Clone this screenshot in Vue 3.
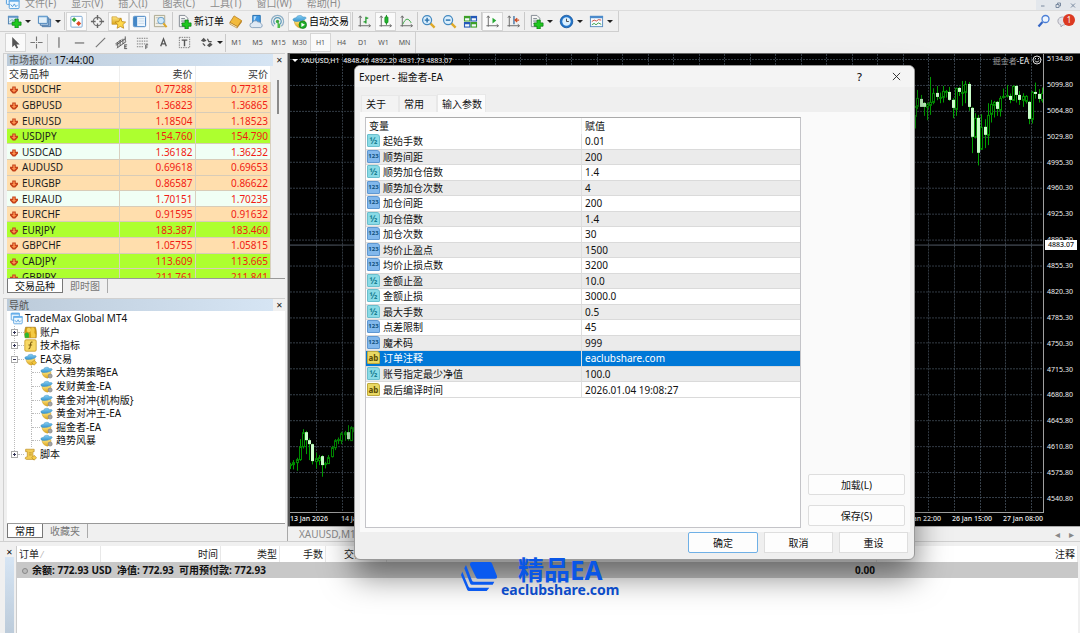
<script setup>
const menus = ['文件(F)', '显示(V)', '插入(I)', '图表(C)', '工具(T)', '窗口(W)', '帮助(H)']

const mainTools = [
  { icon: 'new-chart', label: '新图表', drop: true },
  { icon: 'profiles', label: '配置', drop: true },
  { sep: true, wide: true },
  { icon: 'market', label: '市场报价', on: true },
  { icon: 'crosshair-win', label: '数据窗口' },
  { icon: 'favorite', label: '导航', on: true },
  { icon: 'terminal', label: '终端', on: true },
  { icon: 'tester', label: '策略测试' },
  { sep: true, wide: true },
  { icon: 'order', label: '新订单', text: true },
  { icon: 'book', label: '编辑器' },
  { icon: 'hosting', label: '主机' },
  { icon: 'signal', label: '信号' },
  { icon: 'auto', label: '自动交易', text: true, on: true },
  { sep: true, wide: true },
  { icon: 'bars', label: '柱状图' },
  { icon: 'candles', label: '蜡烛图', on: true },
  { icon: 'line', label: '折线图' },
  { sep: true },
  { icon: 'zoom-in', label: '放大' },
  { icon: 'zoom-out', label: '缩小' },
  { icon: 'tile', label: '平铺' },
  { sep: true },
  { icon: 'scroll', label: '自动滚动', on: true },
  { icon: 'shift', label: '图表平移' },
  { sep: true },
  { icon: 'indicator', label: '指标', drop: true },
  { icon: 'clock', label: '周期', drop: true },
  { icon: 'template', label: '模板', drop: true },
]

const drawTools = [
  { icon: 'cursor', label: '光标', on: true },
  { icon: 'cross', label: '十字线' },
  { sep: true },
  { icon: 'vline', label: '垂直线' },
  { icon: 'hline', label: '水平线' },
  { icon: 'trend', label: '趋势线' },
  { icon: 'channel', label: '通道' },
  { icon: 'fibo', label: '斐波那契' },
  { icon: 'letter', label: '文字' },
  { icon: 'label', label: '标签' },
  { icon: 'arrows', label: '箭头', drop: true },
]
const periods = ['M1', 'M5', 'M15', 'M30', 'H1', 'H4', 'D1', 'W1', 'MN']

const quotes = [
  ['USDCHF', '0.77288', '0.77318', 'peach'],
  ['GBPUSD', '1.36823', '1.36865', 'peach'],
  ['EURUSD', '1.18504', '1.18523', 'peach'],
  ['USDJPY', '154.760', '154.790', 'lime'],
  ['USDCAD', '1.36182', '1.36232', 'mint'],
  ['AUDUSD', '0.69618', '0.69653', 'peach'],
  ['EURGBP', '0.86587', '0.86622', 'peach'],
  ['EURAUD', '1.70151', '1.70235', 'mint'],
  ['EURCHF', '0.91595', '0.91632', 'peach'],
  ['EURJPY', '183.387', '183.460', 'lime'],
  ['GBPCHF', '1.05755', '1.05815', 'peach'],
  ['CADJPY', '113.609', '113.665', 'lime'],
  ['GBPJPY', '211.761', '211.841', 'lime'],
]

const tree = [
  { level: 0, icon: 'broker', text: 'TradeMax Global MT4' },
  { level: 1, icon: 'accounts', text: '账户', box: '+' },
  { level: 1, icon: 'func', text: '技术指标', box: '+' },
  { level: 1, icon: 'expert', text: 'EA交易', box: '-' },
  { level: 2, icon: 'expert-off', text: '大趋势策略EA' },
  { level: 2, icon: 'expert-off', text: '发财黄金-EA' },
  { level: 2, icon: 'expert-off', text: '黄金对冲{机构版}' },
  { level: 2, icon: 'expert-off', text: '黄金对冲王-EA' },
  { level: 2, icon: 'expert-off', text: '掘金者-EA' },
  { level: 2, icon: 'expert-off', text: '趋势风暴' },
  { level: 1, icon: 'script', text: '脚本', box: '+' },
]

const prices = [
  '5134.80', '5099.80', '5064.80', '5029.80', '4995.30', '4960.30', '4925.30', '4890.30', '4855.30',
  '4820.30', '4785.30', '4750.30', '4715.30', '4680.80', '4645.80', '4610.80', '4575.80', '4540.80',
]
const gridX = Array.from({ length: 29 }, (_, i) => Math.round(26 + i * 25.52) + 0.5)
const gridY = prices.map((_, i) => Math.round(5 + i * 25.85) + 0.5)

// [x, high, low, body top, body bottom, falling] in thirds of a pixel
const early = [
  [15, 188, 207, 191, 194, 0], [25, 180, 208, 185, 192, 0], [35, 173, 212, 178, 188, 0], [44, 117, 182, 138, 178, 0],
  [54, 87, 145, 97, 140, 0], [64, 92, 162, 97, 120, 1], [73, 115, 180, 120, 132, 1], [82, 130, 193, 133, 185, 1],
  [92, 158, 205, 175, 185, 0], [101, 165, 195, 170, 178, 0], [111, 165, 230, 168, 194, 1], [121, 185, 205, 188, 192, 0],
  [130, 165, 190, 170, 187, 0], [140, 137, 172, 142, 170, 0], [150, 117, 150, 120, 142, 0], [159, 112, 132, 117, 120, 0],
  [169, 95, 132, 98, 118, 0], [179, 92, 122, 97, 102, 0], [188, 75, 122, 97, 118, 1], [197, 78, 122, 80, 120, 0],
  [206, 78, 100, 80, 92, 0],
]
const late = [
  [104, 315, 383, 318, 345, 0], [112, 267, 325, 292, 315, 0], [122, 282, 318, 294, 318, 1], [132, 303, 345, 307, 319, 1],
  [142, 305, 358, 310, 320, 0], [151, 228, 342, 302, 312, 0], [160, 262, 310, 275, 302, 0], [170, 255, 298, 277, 290, 1],
  [180, 275, 307, 287, 290, 0], [190, 255, 305, 270, 289, 0], [199, 267, 290, 270, 273, 0], [208, 258, 300, 272, 297, 1],
  [218, 292, 352, 297, 321, 1], [227, 260, 345, 260, 322, 0], [237, 258, 285, 260, 272, 1], [247, 240, 315, 272, 275, 0],
  [256, 240, 307, 250, 274, 0], [266, 243, 330, 250, 320, 1], [275, 318, 457, 321, 409, 1], [286, 337, 413, 352, 410, 0],
  [295, 342, 494, 352, 457, 1], [304, 340, 447, 378, 443, 0], [314, 355, 442, 378, 402, 1], [323, 307, 433, 342, 402, 0],
  [333, 297, 365, 310, 340, 0], [342, 300, 350, 303, 313, 0], [351, 300, 345, 303, 325, 1], [361, 285, 347, 290, 325, 0],
  [370, 263, 293, 285, 288, 0], [380, 252, 290, 283, 287, 0], [390, 278, 307, 285, 298, 1], [400, 253, 300, 255, 298, 0],
  [409, 253, 305, 256, 283, 1], [418, 270, 312, 282, 298, 1], [428, 277, 318, 286, 298, 0], [438, 283, 308, 286, 302, 0],
  [448, 300, 370, 303, 354, 1], [457, 270, 368, 272, 352, 0], [466, 245, 293, 273, 280, 1], [476, 265, 305, 280, 295, 1],
  [486, 260, 305, 275, 297, 0],
]
function place(list, ox, oy) {
  return list.map(([x, h, l, t, b, down]) => ({
    x: Math.round(x / 3 + ox),
    high: h / 3 + oy,
    low: l / 3 + oy,
    top: Math.round(t / 3 + oy),
    size: Math.max(1, Math.round((b - t) / 3)),
    down,
  }))
}
const candles = [...place(early, -5, 347), ...place(late, 590, -53)]

const params = [
  ['起始手数', '0.01', 'real'],
  ['顺势间距', '200', 'int'],
  ['顺势加仓倍数', '1.4', 'real'],
  ['顺势加仓次数', '4', 'int'],
  ['加仓间距', '200', 'int'],
  ['加仓倍数', '1.4', 'real'],
  ['加仓次数', '30', 'int'],
  ['均价止盈点', '1500', 'int'],
  ['均价止损点数', '3200', 'int'],
  ['金额止盈', '10.0', 'real'],
  ['金额止损', '3000.0', 'real'],
  ['最大手数', '0.5', 'real'],
  ['点差限制', '45', 'int'],
  ['魔术码', '999', 'int'],
  ['订单注释', 'eaclubshare.com', 'text'],
  ['账号指定最少净值', '100.0', 'real'],
  ['最后编译时间', '2026.01.04 19:08:27', 'text'],
]
const badge = { real: '½', int: '123', text: 'ab' }
</script>

<template>
  <div class="app">
    <svg class="defs" aria-hidden="true">
      <defs>
        <linearGradient id="gold" x1="0" y1="0" x2="0" y2="1"><stop offset="0" stop-color="#ffe680" /><stop offset="1" stop-color="#dba41a" /></linearGradient>
        <linearGradient id="blue" x1="0" y1="0" x2="0" y2="1"><stop offset="0" stop-color="#86cdf2" /><stop offset="1" stop-color="#3796d0" /></linearGradient>
        <symbol id="plus" viewBox="0 0 16 16"><path d="M8.500 6.500h3.500v3h3v3.500h-3v3H8.500v-3h-3V9.500h3z" fill="#1fc81f" stroke="#0a7d12" stroke-width=".8" /></symbol>
        <symbol id="new-chart" viewBox="0 0 16 16"><rect x="1.500" y="2.500" width="10" height="8" fill="#dcecf8" stroke="#4d7fae" /><path d="M1 2h11v2H1z" fill="#5f94c6" /><path d="M3 8l2-2 2 1 3-2" stroke="#7aa" fill="none" /><use href="#plus" y="-1" width="16" height="16" /></symbol>
        <symbol id="profiles" viewBox="0 0 16 16"><path d="M5.500 5.500h9v8h-9z" fill="#8fb4d8" stroke="#4a76a6" /><path d="M3.500 4h9v8h-9z" fill="#b8d3ea" stroke="#4a76a6" /><path d="M1.500 2.500h9.500v7.500H1.500z" fill="#e2f0fa" stroke="#4a84bb" /><path d="M1 2h10.500v1.500H1z" fill="#6aa0d0" /></symbol>
        <symbol id="market" viewBox="0 0 16 16"><rect x="2" y="2.500" width="12" height="11.500" rx="1" fill="#fff" stroke="#76a5d2" /><path d="M5.500 3.500l2.700 2.700-2.700 2.700-2.700-2.700z" fill="#36a83a" /><path d="M10.300 7.500l2.700 2.700-2.700 2.700-2.700-2.700z" fill="#e14a26" /></symbol>
        <symbol id="crosshair-win" viewBox="0 0 16 16"><circle cx="8" cy="8" r="4.500" fill="#f4f4f4" stroke="#777" stroke-width="1.300" /><path d="M8 1v5M8 10v5M1 8h5M10 8h5" stroke="#666" stroke-width="1.500" /></symbol>
        <symbol id="favorite" viewBox="0 0 16 16"><path d="M1 3h5l1 1.500h4V11H1z" fill="url(#gold)" stroke="#c3942c" stroke-width=".7" /><path d="M10 4.500l1.700 3.600 3.900.5-2.900 2.700.8 3.900L10 13.300l-3.500 1.900.8-3.900-2.900-2.700 3.900-.5z" fill="#ffd84a" stroke="#bb8514" stroke-width=".8" /></symbol>
        <symbol id="terminal" viewBox="0 0 16 16"><rect x="1.500" y="2.500" width="13" height="11" rx="1" fill="#eef6fd" stroke="#3e7fbf" /><path d="M2 3h3.500v10H2z" fill="#4387c7" /><path d="M7 5h6M7 7.500h6M7 10h6" stroke="#b7cfe3" stroke-width=".7" /></symbol>
        <symbol id="tester" viewBox="0 0 16 16"><path d="M1.500 1.500h11v12h-11z" fill="#f2f0e4" stroke="#aaa58c" /><path d="M3 4h8M3 10h5" stroke="#bbb" /><circle cx="8.500" cy="7" r="3.500" fill="#cde8fb" stroke="#6ba0ca" /><path d="M11 10l3.500 4" stroke="#dda728" stroke-width="2.200" /></symbol>
        <symbol id="sheet" viewBox="0 0 16 16"><path d="M2.500 1.500h6l3 3v9h-9z" fill="#f6f6f6" stroke="#808890" /><path d="M4.500 5h4M4.500 7.500h4M4.500 10h3" stroke="#68747e" /></symbol>
        <symbol id="order" viewBox="0 0 16 16"><use href="#sheet" width="16" height="16" /><use href="#plus" width="16" height="16" /></symbol>
        <symbol id="book" viewBox="0 0 16 16"><path d="M6.500 2l8 5-4.500 6.500L2 9z" fill="#f2ba3c" stroke="#b57a13" stroke-width=".8" /><path d="M2 9l8 4.500-.3 1.500L2 10.800z" fill="#fff2c4" stroke="#a56f17" stroke-width=".6" /><path d="M14.500 7l-4.500 6.500v1.500l4.800-6.500z" fill="#b87d18" /></symbol>
        <symbol id="hosting" viewBox="0 0 16 16"><path d="M4 1.500h8V10H4z" fill="#3f97e2" stroke="#246faf" /><path d="M5 2.500h3L6 7H5z" fill="#b7defb" /><path d="M3.500 14.500a2.500 2.500 0 010-5 3.500 3.500 0 016-1 3 3 0 013.500 2 2.200 2.200 0 01-.5 4z" fill="#dfe9f4" stroke="#6e8eae" stroke-width=".8" /></symbol>
        <symbol id="signal" viewBox="0 0 16 16"><g fill="none" stroke-width="1.300"><path d="M4 13a6.500 6.500 0 118 0" stroke="#8eafc6" /><path d="M5.500 11a4 4 0 115 0" stroke="#5b9bb9" /></g><circle cx="8" cy="8" r="1.800" fill="#39a83f" /><path d="M8 9c3 1 3.500 3.500 2.500 6H8z" fill="#4cbb4a" /></symbol>
        <symbol id="expert-base" viewBox="0 0 16 16"><path d="M2.500 7c0 4 2 7 6.500 8 3.500-1 4.500-4.500 4.500-8z" fill="url(#gold)" stroke="#c79a25" stroke-width=".6" /><path d="M1 6C1 4.800 3 4.300 4.500 4 5 1.300 10.500.5 11.500 3.300c1.500-.2 3.500-.2 3.500.8 0 2-5.500 4-9.500 3.900C3 8 1 7.200 1 6z" fill="url(#blue)" stroke="#3b8cc0" stroke-width=".6" /></symbol>
        <symbol id="auto" viewBox="0 0 16 16"><use href="#expert-base" width="16" height="16" /><circle cx="11.500" cy="11.500" r="4" fill="#20ad29" stroke="#0b7814" stroke-width=".7" /><path d="M10 9.200v4.600l3.800-2.300z" fill="#fff" /></symbol>
        <symbol id="expert" viewBox="0 0 16 16"><use href="#expert-base" width="16" height="16" /><path d="M12.500 9l3 3-3 3-3-3z" fill="#f3c63c" stroke="#a87c16" stroke-width=".7" /></symbol>
        <symbol id="expert-off" viewBox="0 0 16 16"><use href="#expert-base" width="16" height="16" /><circle cx="12.500" cy="12.300" r="2.500" fill="#a5a5a5" stroke="#808080" stroke-width=".8" /></symbol>
        <symbol id="axes" viewBox="0 0 16 16"><path d="M3.500 2v11.500M1.500 12.500H14M2 4l1.500-2L5 4M12.500 11l2 1.500-2 1.500" stroke="#666" fill="none" /></symbol>
        <symbol id="bars" viewBox="0 0 16 16"><use href="#axes" width="16" height="16" /><path d="M9.500 3v7M9.500 4.500H12M7 8.500h2.500" stroke="#179521" stroke-width="1.300" /></symbol>
        <symbol id="candles" viewBox="0 0 16 16"><use href="#axes" width="16" height="16" /><path d="M9 1v10.500" stroke="#13851c" /><rect x="7.300" y="3" width="3.400" height="6.500" rx="1" fill="#22b52d" stroke="#13851c" stroke-width=".7" /></symbol>
        <symbol id="line" viewBox="0 0 16 16"><use href="#axes" width="16" height="16" /><path d="M4 11c3-7 6-7 9-1.500" stroke="#38a541" fill="none" /></symbol>
        <symbol id="lens" viewBox="0 0 16 16"><path d="M9.500 9.500l5 5" stroke="#dfa928" stroke-width="2.500" /><circle cx="6.500" cy="6.500" r="4.800" fill="#dbeffd" stroke="#4388bf" stroke-width="1.300" /></symbol>
        <symbol id="zoom-in" viewBox="0 0 16 16"><use href="#lens" width="16" height="16" /><path d="M4 6.500h5M6.500 4v5" stroke="#276fab" stroke-width="1.500" /></symbol>
        <symbol id="zoom-out" viewBox="0 0 16 16"><use href="#lens" width="16" height="16" /><path d="M4 6.500h5" stroke="#276fab" stroke-width="1.500" /></symbol>
        <symbol id="tile" viewBox="0 0 16 16"><path d="M1 2h7v6H1z" fill="#3da029" /><path d="M8 2h7v6H8z" fill="#2358b8" /><path d="M1 8.500h7v6H1z" fill="#2358b8" /><path d="M8 8.500h7v6H8z" fill="#3da029" /><path d="M2.200 4.500h4.500v2.300H2.200zM9.300 4.500h4.500v2.300H9.300zM2.200 11h4.500v2.300H2.200zM9.300 11h4.500v2.300H9.300z" fill="#f1f8fb" /></symbol>
        <symbol id="scroll" viewBox="0 0 16 16"><use href="#axes" width="16" height="16" /><path d="M8 4v6l4-3z" fill="#26a832" /></symbol>
        <symbol id="shift" viewBox="0 0 16 16"><use href="#axes" width="16" height="16" /><path d="M8.500 2v9" stroke="#29639b" stroke-width="1.300" /><path d="M14 6.500H9.500M12 4.500l-2.500 2 2.500 2" stroke="#cf4a20" fill="none" stroke-width="1.200" /></symbol>
        <symbol id="indicator" viewBox="0 0 16 16"><use href="#sheet" width="16" height="16" /><use href="#plus" width="16" height="16" /></symbol>
        <symbol id="clock" viewBox="0 0 16 16"><circle cx="8" cy="8" r="6.700" fill="#2376cb" stroke="#0e4e95" stroke-width=".8" /><circle cx="8" cy="8" r="4.500" fill="#d9efff" /><path d="M8 5v3h2.500" stroke="#444" fill="none" /></symbol>
        <symbol id="template" viewBox="0 0 16 16"><rect x="1.500" y="2.500" width="13" height="11" fill="#f7fbff" stroke="#588cbe" /><path d="M1 2h14v2.500H1z" fill="#4b8acb" /><path d="M3 8l2.500-1.500L8 7.500 10 6l3 .5" stroke="#cb4835" fill="none" /><path d="M3 11.500L5.500 10l2 1.500L10 9.500l3 1.500" stroke="#369c43" fill="none" /></symbol>
        <symbol id="cursor" viewBox="0 0 16 16"><path d="M4.500 2v11l2.600-2.400L9 14.500l1.800-.9L9 10h3.500z" fill="#555" /></symbol>
        <symbol id="cross" viewBox="0 0 16 16"><path d="M8 1.500v5M8 9.500v5M1.500 8h5M9.500 8h5M7.500 8h1" stroke="#777" stroke-width="1.200" /></symbol>
        <symbol id="vline" viewBox="0 0 16 16"><path d="M8.500 2.500v11" stroke="#666" stroke-width="1.200" /></symbol>
        <symbol id="hline" viewBox="0 0 16 16"><path d="M3 8.500h10" stroke="#666" stroke-width="1.200" /></symbol>
        <symbol id="trend" viewBox="0 0 16 16"><path d="M3 13L13 3" stroke="#777" stroke-width="1.200" /></symbol>
        <symbol id="channel" viewBox="0 0 16 16"><path d="M2 11L12 4M3 14L13 7M4 8v5M6.500 5.500v6M9.500 4v5.500M12 1.500V7M1.500 9.500L8 5" stroke="#555" /><path d="M11 10.500h3M11 12.500h2.500M11 14.500h3M11.500 10.500v4" stroke="#555" /></symbol>
        <symbol id="fibo" viewBox="0 0 16 16"><path d="M2 3.500h12M2 6.500h12M2 9.500h12M2 12.500h7" stroke="#777" stroke-dasharray="1.500 1" /><path d="M11.500 15v-4.500H14M11.500 12.800h2" stroke="#555" fill="none" /></symbol>
        <symbol id="letter" viewBox="0 0 16 16"><path d="M5 12L8 4l3 8M6 9.500h4" stroke="#555" stroke-width="1.400" fill="none" /></symbol>
        <symbol id="label" viewBox="0 0 16 16"><rect x="2.500" y="2.500" width="11" height="11" fill="none" stroke="#777" stroke-dasharray="1.500 1" /><path d="M5 5.500h6M8 5.500V12" stroke="#555" stroke-width="1.500" /></symbol>
        <symbol id="arrows" viewBox="0 0 16 16"><path d="M5 3l3 3-3 1.500L2 6zM12 8l2.500 2.500L11 13 8.500 11z" fill="#555" /><path d="M4 9l2.500 2.500M9 4l1.500 3h3" stroke="#555" stroke-width="1.300" fill="none" /></symbol>
        <symbol id="broker" viewBox="0 0 16 16"><rect x="1.500" y="1.500" width="10" height="8.500" rx="1" fill="#e7f4ff" stroke="#4d9bdc" /><path d="M1 1h11v2.200H1z" fill="#66aeea" /><rect x="4.500" y="5.500" width="10.500" height="9" rx="1" fill="#eef8ff" stroke="#4d9bdc" /><path d="M4 5h11.500v2.200H4z" fill="#66aeea" /><path d="M6 10l2 2.500 2-3 1.500 3 2-2" stroke="#4d9bdc" fill="none" /></symbol>
        <symbol id="accounts" viewBox="0 0 16 16"><path d="M2 1.500h12c1.500 4 1.500 9 1 13H1.500C.500 10 .500 6 2 1.500z" fill="#d39d16" stroke="#9a6e08" stroke-width=".7" /><circle cx="6" cy="5" r="2.700" fill="#f6d257" /><path d="M9 2c3-1 4.500 1 4 4-.5 1.500-.5 2.500 1 4v4H8.500c1-4-1-5 0-7z" fill="#f4ca45" /><path d="M1 14.500V10c1-2.500 4-2.500 5 0v4.500z" fill="#2fb72f" /></symbol>
        <symbol id="func" viewBox="0 0 16 16"><rect x="1" y="1" width="14" height="14" rx="1.500" fill="#f7d864" stroke="#c89b25" /><path d="M10.500 4c-2-1-2.300.5-2.700 3.500S7.300 12.500 5.500 12M5.500 7.500h4.500" stroke="#7b5b0c" stroke-width="1.300" fill="none" /></symbol>
        <symbol id="script" viewBox="0 0 16 16"><path d="M2 1.500h10.500v3H11V11h1.500v3H3c-2 0-2-3 0-3h1V4.500H2z" fill="#f3cd54" stroke="#b98a20" stroke-width=".8" /><path d="M6 6h3.500M6 8.500h3.500" stroke="#b88d28" /><path d="M12.500 9l3 3-3 3-3-3z" fill="#f7cc47" stroke="#a87c16" stroke-width=".7" /></symbol>
        <symbol id="down" viewBox="0 0 16 16"><path d="M4.500 1h7v4.500H16V9l-5.500 6h-5L0 9V5.500h4.500z" fill="#c4421a" /><path d="M6.500 3h3v5h3L8 12.500 3.500 8h3z" fill="#ff9350" /></symbol>
      </defs>
    </svg>

    <header class="top">
      <nav class="menu">
        <svg class="i16"><use href="#broker" /></svg>
        <a v-for="m in menus" :key="m" href="#">{{ m }}</a>
        <div class="winbtns">
          <button aria-label="最小化"><svg viewBox="0 0 6 6"><path d="M1 4h3.500" /></svg></button>
          <button aria-label="还原"><svg viewBox="0 0 6 6"><path d="M1 2.500h3v3H1zM2.500 2.500V1H5.500v3H4" /></svg></button>
          <button aria-label="关闭"><svg viewBox="0 0 6 6"><path d="M1 1.500l4 4M5 1.500l-4 4" /></svg></button>
        </div>
      </nav>
      <div class="bars">
        <div>
          <div class="toolbar first">
            <template v-for="(t, i) in mainTools" :key="i">
              <i v-if="t.sep" class="sep" :class="{ wide: t.wide }"></i>
              <button v-else class="tool" :class="{ on: t.on, drop: t.drop, text: t.text }" :aria-label="t.label">
                <svg class="i16"><use :href="'#' + t.icon" /></svg>
                <span v-if="t.text">{{ t.label }}</span>
                <i v-if="t.drop" class="caret"></i>
              </button>
            </template>
          </div>
          <div class="toolbar second">
            <template v-for="(t, i) in drawTools" :key="i">
              <i v-if="t.sep" class="sep"></i>
              <button v-else class="tool" :class="{ on: t.on, drop: t.drop }" :aria-label="t.label">
                <svg class="i16"><use :href="'#' + t.icon" /></svg>
                <i v-if="t.drop" class="caret"></i>
              </button>
            </template>
            <i class="sep"></i>
            <button v-for="p in periods" :key="p" class="tool period" :class="{ on: p === 'H1' }">{{ p }}</button>
          </div>
        </div>
        <div class="right-tools">
          <button aria-label="搜索"><svg viewBox="0 0 14 14"><path d="M5.500 8L1.500 12.500" stroke="#3465c4" stroke-width="2.200" /><circle cx="8.500" cy="5" r="3.500" fill="#eef6ff" stroke="#4b7fd6" stroke-width="1.300" /></svg></button>
          <button class="bell" aria-label="通知"><svg viewBox="0 0 14 14"><path d="M1 6c1-4 8-4 9 0s-2 5-4 5l-2 2v-2C2 10.500.500 8.500 1 6z" fill="#e3e3ea" stroke="#a9a9b4" /></svg><span class="count">1</span></button>
        </div>
      </div>
    </header>

    <main class="work">
      <aside class="dock">
        <section class="panel quotes">
          <div class="cap"><h2>市场报价: <b>17:44:00</b></h2><button aria-label="关闭市场报价">✕</button></div>
          <div class="quote-body">
            <table>
              <thead><tr><th>交易品种</th><th>卖价</th><th>买价</th></tr></thead>
              <tbody>
                <tr v-for="q in quotes" :key="q[0]" :class="q[3]">
                  <td><svg class="arrow"><use href="#down" /></svg>{{ q[0] }}</td><td>{{ q[1] }}</td><td>{{ q[2] }}</td>
                </tr>
              </tbody>
            </table>
            <div class="track"><i></i></div>
          </div>
          <div class="tabs"><button class="active">交易品种</button><button>即时图</button></div>
        </section>
        <section class="panel navigator">
          <div class="cap"><h2>导航</h2><button aria-label="关闭导航">✕</button></div>
          <div class="tree-body">
            <ul class="tree">
              <li v-for="n in tree" :key="n.text" :class="'l' + n.level">
                <i v-if="n.level === 2" class="stem"></i>
                <i v-if="n.box" class="box" :class="{ plus: n.box === '+' }"></i>
                <i v-if="n.level" class="dots"></i>
                <svg class="node"><use :href="'#' + n.icon" /></svg><span>{{ n.text }}</span>
              </li>
            </ul>
          </div>
          <div class="tabs"><button class="active">常用</button><button>收藏夹</button></div>
        </section>
      </aside>

      <section class="chart-area">
        <div class="chart">
          <div class="plot">
            <svg viewBox="0 0 753 459" preserveAspectRatio="none">
              <g class="grid">
                <line v-for="x in gridX" :key="'x' + x" :x1="x" :x2="x" y1="0" y2="459" />
                <line v-for="y in gridY" :key="'y' + y" x1="0" x2="753" :y1="y" :y2="y" />
              </g>
              <line class="now" x1="0" x2="753" y1="191.5" y2="191.5" />
              <g v-for="c in candles" :key="c.x" :class="c.down ? 'fall' : 'rise'">
                <line :x1="c.x + 0.5" :x2="c.x + 0.5" :y1="c.high" :y2="c.low" />
                <rect v-if="c.down" :x="c.x - 1" :y="c.top" width="3" :height="c.size" />
                <rect v-else :x="c.x - 0.5" :y="c.top + 0.5" width="2" :height="c.size" />
              </g>
            </svg>
            <p class="ohlc"><i></i>XAUUSD,H1&nbsp; 4848.46 4892.20 4831.73 4883.07</p>
            <p class="ea-name"><span>掘金者</span>-EA <svg viewBox="0 0 10 10"><circle cx="5" cy="5" r="4" /><path d="M3 5.500c.500 2 3.500 2 4 0M3.500 3v1M6.500 3v1" /></svg></p>
          </div>
          <ol class="price-axis"><li v-for="p in prices" :key="p">{{ p }}</li></ol>
          <div class="time-axis">
            <span>13 Jan 2026</span><span>14 Jan 07:00</span>
            <span class="push">23 Jan 22:00</span><span>26 Jan 15:00</span><span>27 Jan 08:00</span>
          </div>
          <span class="price-tag">4883.07</span>
        </div>
        <div class="chart-tabs"><button>XAUUSD,M1</button><span>◂</span><span>▸</span></div>
      </section>
    </main>

    <section class="terminal">
      <div class="strip"><button aria-label="关闭终端">✕</button><i></i></div>
      <div class="orders">
        <table>
          <colgroup><col class="c1"><col class="c2"><col class="c3"><col class="c4"><col class="c5"><col><col class="c7"></colgroup>
          <thead><tr><th>订单 <small>⁄</small></th><th>时间</th><th>类型</th><th>手数</th><th>交易品种</th><th></th><th>注释</th></tr></thead>
          <tbody><tr><td colspan="5"><i class="dot"></i>余额: 772.93 USD&nbsp; 净值: 772.93&nbsp; 可用预付款: 772.93</td><td>0.00</td><td></td></tr></tbody>
        </table>
      </div>
    </section>

    <div class="dialog" role="dialog" aria-label="Expert - 掘金者-EA">
      <div class="title"><h1>Expert - 掘金者-EA</h1><button class="help" aria-label="帮助">?</button><button aria-label="关闭"><svg viewBox="0 0 10 10"><path d="M1 1l8 8M9 1L1 9" /></svg></button></div>
      <div class="dlg-tabs"><button>关于</button><button>常用</button><button class="active">输入参数</button></div>
      <div class="page">
        <div class="list">
          <table>
            <thead><tr><th>变量</th><th>赋值</th></tr></thead>
            <tbody>
              <tr v-for="p in params" :key="p[0]" :class="{ picked: p[0] === '订单注释' }">
                <td><i class="kind" :class="p[2]">{{ badge[p[2]] }}</i>{{ p[0] }}</td><td>{{ p[1] }}</td>
              </tr>
            </tbody>
          </table>
        </div>
        <div class="side"><button>加载(L)</button><button>保存(S)</button></div>
      </div>
      <div class="actions"><button class="primary">确定</button><button>取消</button><button>重设</button></div>
    </div>

    <div class="mark">
      <svg viewBox="0 0 36 30"><path d="M11 0h18q1.500 0 2 1.500L36 14q.500 2.700-2 2.700H17q-1.500 0-2-1.500L9 3Q8.700 0 11 0z" /><path d="M5 3l6 15.500q.500 1.200 2 1.200h20.300l-1.600 3H11q-1.300 0-1.800-1.200L3.300 6.300z" /><path d="M1.300 9.700L7.500 24.500q.500 1.200 2 1.200h18.800L25.700 29H8q-1.300 0-1.800-1.200L0 13z" /></svg>
      <div><strong>精品EA</strong><span>eaclubshare.com</span></div>
    </div>
  </div>
</template>

<style>
html, body { margin: 0; background: #f0f0f0; }
</style>

<style scoped>
* { box-sizing: border-box; }
.app {
  position: relative; display: flex; flex-direction: column; height: 100vh; overflow: hidden;
  background: #f0f0f0; color: #111; font: 10px/14px "Noto Sans", "Noto Sans CJK SC", sans-serif;
}
button { font: inherit; color: inherit; border: 0; background: none; padding: 0; margin: 0; white-space: nowrap; }
h1, h2, p, ul, ol { margin: 0; padding: 0; font-size: inherit; font-weight: 400; list-style: none; }
table { border-collapse: separate; border-spacing: 0; table-layout: fixed; width: 100%; }
th, td { padding: 0; font-weight: 400; line-height: 14px; white-space: nowrap; }
svg { display: block; flex: none; }
.defs { position: absolute; width: 0; height: 0; }
.i16 { width: 15px; height: 15px; }

.menu { display: flex; align-items: flex-end; gap: 15px; height: 11px; padding-left: 5px; overflow: hidden; border-bottom: 1px solid #dcdcdc; color: #8c8c8c; }
.menu > svg { margin-right: -10px; }
.menu a { color: inherit; text-decoration: none; }
.winbtns { margin-left: auto; display: flex; width: 44px; height: 10px; background: #e3e7ec; justify-content: space-around; align-items: center; }
.winbtns svg { width: 6px; height: 6px; fill: none; stroke: #7a8aa0; stroke-width: 1; }
.bars { display: flex; justify-content: space-between; align-items: flex-start; height: 42px; }
.toolbar { display: flex; align-items: center; height: 21px; width: max-content; border: 0 solid #cfcfcf; border-right-width: 1px; }
.toolbar.first { padding-left: 3px; padding-right: 3px; border-bottom-width: 1px; }
.toolbar.second { padding-left: 5px; }
.tool { display: flex; align-items: center; justify-content: center; width: 21px; height: 19px; }
.tool.on { background: #fafafa; border: 1px solid #d6d6d6; }
.tool.drop { width: 30px; padding-left: 4px; justify-content: flex-start; gap: 3px; }
.tool.text { width: auto; padding: 0 1px 0 3px; gap: 2px; color: #000; }
.tool.period { color: #555; font-size: 7px; }
.caret { border: 3px solid transparent; border-top-color: #222; border-bottom: 0; }
.sep { width: 1px; height: 18px; background: #c9c9c9; }
.sep.wide { margin: 0 1px; }
.right-tools { display: flex; align-items: center; gap: 6px; padding: 3px 5px 0 0; }
.right-tools svg { width: 14px; height: 14px; }
.bell { position: relative; width: 18px; }
.count { position: absolute; right: 0; top: 0; width: 12px; height: 12px; border-radius: 50%; background: #dc3a22; color: #fff; font-size: 8px; line-height: 12px; }

.work { display: flex; flex: 1; min-height: 0; }
.dock { display: flex; flex-direction: column; gap: 4px; width: 288px; padding: 0 2px 0 3px; border-right: 1px solid #a8a8a8; }
.panel { display: flex; flex-direction: column; padding-left: 3px; border: 1px solid #d0d0d0; border-width: 1px 0 0 1px; }
.quotes { flex: 0 0 240px; }
.navigator { flex: 1; min-height: 0; }
.cap { display: flex; flex: none; height: 12px; line-height: 12px; }
.cap h2 { flex: 1; padding-left: 2px; background: linear-gradient(90deg, #bccbda, #d6e5f4); color: #555; }
.cap b { color: #111; font-weight: 400; }
.cap button { width: 12px; font-size: 8px; color: #222; }
.quote-body { display: flex; flex: none; height: 213px; overflow: hidden; background: #fff; border-bottom: 1px solid #999; }
.quote-body table { flex: 1; height: 219px; }
.quote-body th:first-child { width: 113px; text-align: left; padding-left: 2px; }
.quote-body th { height: 16px; text-align: right; padding-right: 2px; border-right: 1px solid #eee; color: #333; }
.quote-body td { text-align: right; padding-right: 2px; color: #f11c14; border-bottom: 1px solid #d8ccb8; border-right: 1px solid #d8d0c0; }
.quote-body td:first-child { text-align: left; color: #1c1c1c; }
.peach { background: #ffdead; }
.lime { background: #adff2f; }
.mint { background: #f0fff5; }
.arrow { display: inline-block; width: 8px; height: 8px; margin: 0 4px 0 3px; vertical-align: -1px; }
.track { width: 14px; background: #f0f0f0; padding: 14px 6px 0; }
.track i { display: block; width: 2px; height: 34px; background: #8a8a8a; }
.tabs { display: flex; flex: none; height: 15px; }
.tabs button { padding: 0 7px; color: #777; border-right: 1px solid #aaa; height: 14px; line-height: 14px; }
.tabs .active { background: #fff; color: #111; border: 1px solid #777; border-top: 0; }
.navigator .tabs { height: 17px; }
.tree-body { flex: 1; min-height: 0; padding-top: 1px; background: #fff; border-bottom: 1px solid #999; }
.tree { position: relative; height: 149px; display: grid; grid-auto-rows: 1fr; }
.tree::before { content: ""; position: absolute; left: 7px; top: 14px; bottom: 8px; border-left: 1px dotted #bbb; }
.tree li { display: flex; align-items: center; position: relative; color: #111; line-height: 13px; min-height: 0; }
.node { width: 13px; height: 13px; margin-right: 3px; }
.l0 { padding-left: 3px; }
.l0 .node { margin-right: 2px; }
.l1 { padding-left: 4px; }
.l2 { padding-left: 24px; }
.box { position: relative; width: 7px; height: 7px; border: 1px solid #aaa; background: linear-gradient(#335, #335) center / 3px 1px no-repeat #fff; }
.box.plus { background: linear-gradient(#335, #335) center / 3px 1px no-repeat, linear-gradient(#335, #335) center / 1px 3px no-repeat, #fff; }
.dots { width: 6px; height: 1px; border-top: 1px dotted #bbb; }
.l2 .dots { width: 8px; }
.stem { align-self: stretch; border-left: 1px dotted #bbb; }

.chart-area { display: flex; flex-direction: column; flex: 1; min-width: 0; }
.chart { position: relative; display: grid; grid-template: minmax(0, 1fr) 13px / minmax(0, 1fr) 36px; flex: 1; min-height: 0; background: #000; border-left: 2px solid #555; border-top: 1px solid #666; color: #efefef; font-size: 7px; line-height: 9px; font-weight: 500; }
.plot { position: relative; min-height: 0; border-right: 1px solid #a0a0a0; border-bottom: 1px solid #a0a0a0; }
.plot > svg { width: 100%; height: 100%; position: absolute; }
.grid line { stroke: #45505c; stroke-dasharray: 2 1; opacity: .8; }
.now { stroke: #56606c; }
.rise line, .fall line { stroke: #00a000; }
.rise rect { fill: #000; stroke: #008a00; stroke-width: 1; }
.fall rect { fill: #c9ffc9; }
.ohlc { position: absolute; top: 2px; left: 2px; display: flex; align-items: center; gap: 3px; color: #fff; }
.ohlc i { border: 3px solid transparent; border-top-color: #fff; border-bottom: 0; }
.ea-name { position: absolute; top: 1px; right: 1px; display: flex; align-items: center; font-size: 8px; }
.ea-name span { color: #999; }
.ea-name svg { width: 10px; height: 10px; margin-left: 3px; fill: none; stroke: #ddd; }
.price-axis { display: flex; flex-direction: column; justify-content: space-between; padding: 0 0 10px 3px; }
.time-axis { display: flex; grid-column: 1 / 3; line-height: 12px; white-space: nowrap; padding-right: 26px; }
.time-axis span { width: 51px; }
.time-axis .push { margin-left: auto; }
.price-tag { position: absolute; right: 3px; top: 186px; width: 32px; background: #fff; color: #111; text-align: center; line-height: 10px; }
.chart-tabs { display: flex; height: 15px; padding-right: 2px; color: #888; border-top: 1px solid #aaa; }
.chart-tabs button { padding-left: 11px; margin-right: auto; }
.chart-tabs span { width: 14px; text-align: center; }

.terminal { display: flex; height: 92px; border-top: 1px solid #d0d0d0; padding: 4px 2px 0 5px; }
.strip { display: flex; flex-direction: column; width: 12px; padding-right: 2px; border-right: 1px solid #ccc; }
.strip button { height: 11px; width: 9px; font-size: 8px; line-height: 10px; }
.strip i { flex: 1; background: linear-gradient(#d6e5f4, #bccbda); }
.orders { flex: 1; background: #fff; }
.c1 { width: 84px; }
.c2 { width: 120px; }
.c3 { width: 59px; }
.c4 { width: 46px; }
.c5 { width: 61px; }
.c7 { width: 201px; }
.terminal th { height: 16px; padding: 0 2px; text-align: right; border-right: 1px solid #e8e8e8; color: #222; }
.terminal th:first-child { text-align: left; }
.terminal small { color: #aaa; }
.terminal td { height: 16px; background: #c8c8c8; font-weight: 700; text-align: right; padding-right: 2px; }
.terminal td:first-child { text-align: left; }
.dot { display: inline-block; width: 6px; height: 6px; margin: 0 4px 0 5px; border: 1px solid #888; border-radius: 50%; background: #bbb; }

.dialog { position: absolute; left: 354px; top: 65px; width: 561px; display: flex; flex-direction: column; background: #efefef; border: 1px solid #999; border-radius: 6px; box-shadow: 0 16px 32px rgba(0, 0, 0, .5); }
.title { display: flex; align-items: center; height: 21px; padding: 0 13px 0 4px; background: #f4f4f4; border-radius: 5px 5px 0 0; }
.title h1 { flex: 1; }
.title .help { margin-right: 30px; font-size: 11px; font-weight: 500; }
.title svg { width: 9px; height: 9px; fill: none; stroke: #222; }
.dlg-tabs { display: flex; align-items: flex-end; height: 25px; padding-left: 6px; }
.dlg-tabs button { height: 17px; padding: 0 11px 0 4px; background: #f3f3f3; border: 1px solid #e8e8e8; border-bottom: 0; width: 38px; text-align: left; }
.dlg-tabs .active { height: 18px; width: 49px; background: #fbfbfb; padding: 0 4px; }
.page { display: flex; gap: 7px; margin: 0 4px 0 5px; padding: 5px 5px 4px 5px; background: #fafafa; }
.list { flex: 1; height: 411px; background: #fff; border: 1px solid #c4c4c8; border-top-color: #aaa; }
.list table { height: 280px; }
.list th { height: 16px; text-align: left; padding-left: 3px; }
.list th:first-child { width: 216px; border-right: 1px solid #eee; }
.list td { border-bottom: 1px solid #dadada; padding-left: 3px; }
.list td:first-child { padding-left: 1px; border-right: 1px solid #dedede; }
.list tbody tr:nth-child(even) { background: #ebebeb; }
.list tbody tr.picked { background: #0078d7; color: #fff; }
.kind { display: inline-block; width: 13px; height: 13px; margin-right: 3px; border: 1px solid #5aa0c0; border-radius: 1px 3px 1px 1px; font: 700 7px/11px "Noto Sans", sans-serif; text-align: center; vertical-align: top; color: #10507c; }
.kind.real { background: #8adbe6; color: #1b8296; border-color: #6abfce; font-size: 9px; }
.kind.int { background: #82b8ec; border-color: #5f98d2; font-size: 6px; }
.kind.text { background: #e9d863; border-color: #bfa93c; color: #5a4a00; font-size: 8px; }
.side { display: flex; flex-direction: column; justify-content: flex-end; gap: 10px; width: 97px; padding-bottom: 2px; }
.side button { height: 21px; background: #fdfdfd; border: 1px solid #dedede; border-radius: 2px; }
.actions { display: flex; justify-content: flex-end; gap: 6px; padding: 0 6px 6px; }
.actions button { width: 69px; height: 21px; background: #fdfdfd; border: 1px solid #dedede; }
.actions .primary { width: 70px; border-color: #6fb0e6; border-radius: 2px; }

.mark { position: absolute; left: 461px; top: 557px; display: flex; align-items: center; gap: 4px; color: #0a56e6; }
.mark svg { width: 36px; height: 30px; fill: #0a5af0; }
.mark div { display: flex; flex-direction: column; align-items: center; }
.mark strong { font-size: 26px; line-height: 26px; font-weight: 700; }
.mark span { font-size: 14px; line-height: 14px; font-weight: 700; color: #0c4cc8; }
</style>
